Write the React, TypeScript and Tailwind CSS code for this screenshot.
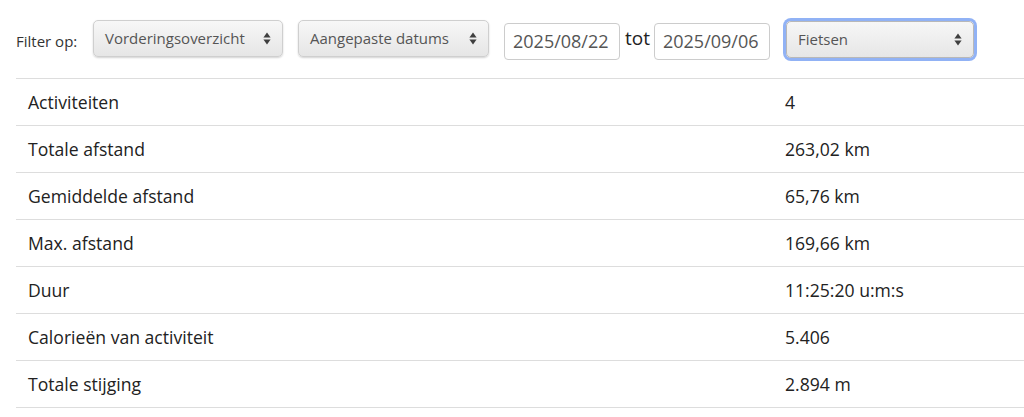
import React from "react";

const rows: [string, string][] = [
  ["Activiteiten", "4"],
  ["Totale afstand", "263,02 km"],
  ["Gemiddelde afstand", "65,76 km"],
  ["Max. afstand", "169,66 km"],
  ["Duur", "11:25:20 u:m:s"],
  ["Calorieën van activiteit", "5.406"],
  ["Totale stijging", "2.894 m"],
];

const Arrows = () => (
  <svg width="8" height="13" viewBox="0 0 8 13" className="shrink-0">
    <path d="M4 0.5 L7.6 5.4 H0.4 Z" fill="#3f3f3f" />
    <path d="M4 12.5 L7.6 7.6 H0.4 Z" fill="#3f3f3f" />
  </svg>
);

interface SelectProps {
  label: string;
  width: string;
  focused?: boolean;
}

const FakeSelect: React.FC<SelectProps> = ({ label, width, focused }) => (
  <div
    className={`${width} h-[37px] flex items-center justify-between pl-[11px] pr-[11px] rounded-[5px] bg-gradient-to-b from-[#f7f7f7] to-[#e6e6e6] text-[15px] text-[#555] shadow-[0_1px_2px_rgba(0,0,0,0.18)] ${
      focused
        ? "ring-[3px] ring-[#91b2f5] border border-[#b8b8b8]"
        : "border border-[#cfcfcf]"
    }`}
  >
    <span>{label}</span>
    <Arrows />
  </div>
);

const DateInput: React.FC<{ value: string }> = ({ value }) => (
  <div className="w-[116px] h-[37px] flex items-center px-[8px] border border-[#cccccc] rounded-[4px] bg-white text-[18px] text-[#555]">
    {value}
  </div>
);

export default function App() {
  return (
    <div
      className="bg-white w-[1024px] h-[417px] overflow-hidden pl-4"
      style={{ fontFamily: '"Open Sans", "Liberation Sans", sans-serif' }}
    >
      {/* Filter bar */}
      <div className="flex items-center h-[78px] pb-[2px]">
        <span className="w-[62px] whitespace-nowrap text-[15px] text-[#333] mr-[15px] mt-[6px]">
          Filter op:
        </span>
        <div className="flex items-center gap-[15px]">
          <FakeSelect label="Vorderingsoverzicht" width="w-[190px]" />
          <FakeSelect label="Aangepaste datums" width="w-[191px]" />
        </div>
        <div className="flex items-center ml-[15px] mt-[6px]">
          <DateInput value="2025/08/22" />
          <span className="text-[19px] font-medium text-[#222] ml-[5px] mr-[4px] -mt-[6px]">
            tot
          </span>
          <DateInput value="2025/09/06" />
        </div>
        <div className="ml-[16px] mt-[2px]">
          <FakeSelect label="Fietsen" width="w-[188px]" focused />
        </div>
      </div>

      {/* Stats table */}
      <div className="border-t border-[#dddddd] text-[17.6px] text-[#222]">
        {rows.map(([label, value]) => (
          <div
            key={label}
            className="grid grid-cols-[757px_1fr] h-[47px] items-center border-b border-[#dddddd]"
          >
            <div className="px-3">{label}</div>
            <div className="px-3">{value}</div>
          </div>
        ))}
      </div>
    </div>
  );
}
